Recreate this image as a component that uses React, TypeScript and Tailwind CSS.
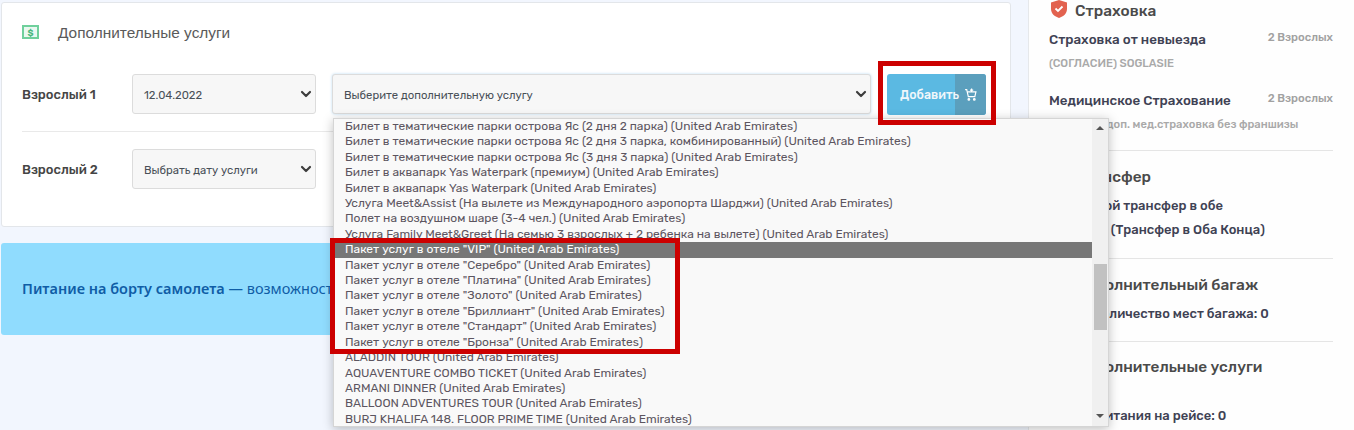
import { ChevronDown } from "lucide-react";

const FONT = "font-['Rubik','Noto_Sans','Open_Sans',sans-serif]";

const options = [
  'Билет в тематические парки острова Яс (2 дня 2 парка) (United Arab Emirates)',
  'Билет в тематические парки острова Яс (2 дня 3 парка, комбинированный) (United Arab Emirates)',
  'Билет в тематические парки острова Яс (3 дня 3 парка) (United Arab Emirates)',
  'Билет в аквапарк Yas Waterpark (премиум) (United Arab Emirates)',
  'Билет в аквапарк Yas Waterpark (United Arab Emirates)',
  'Услуга Meet&Assist (На вылете из Международного аэропорта Шарджи) (United Arab Emirates)',
  'Полет на воздушном шаре (3-4 чел.) (United Arab Emirates)',
  'Услуга Family Meet&Greet (На семью 3 взрослых + 2 ребенка на вылете) (United Arab Emirates)',
  'Пакет услуг в отеле "VIP" (United Arab Emirates)',
  'Пакет услуг в отеле "Серебро" (United Arab Emirates)',
  'Пакет услуг в отеле "Платина" (United Arab Emirates)',
  'Пакет услуг в отеле "Золото" (United Arab Emirates)',
  'Пакет услуг в отеле "Бриллиант" (United Arab Emirates)',
  'Пакет услуг в отеле "Стандарт" (United Arab Emirates)',
  'Пакет услуг в отеле "Бронза" (United Arab Emirates)',
  'ALADDIN TOUR (United Arab Emirates)',
  'AQUAVENTURE COMBO TICKET (United Arab Emirates)',
  'ARMANI DINNER (United Arab Emirates)',
  'BALLOON ADVENTURES TOUR (United Arab Emirates)',
  'BURJ KHALIFA 148. FLOOR PRIME TIME (United Arab Emirates)',
];

function FakeSelect({ text, className }: { text: string; className: string }) {
  return (
    <div className={`h-10 flex items-center justify-between rounded-[3px] border border-[#dcdcdc] bg-[#f7f7f7] pl-[11px] pr-[1px] text-[11.3px] text-[#495057] ${className}`}>
      <span className="whitespace-nowrap pt-[2px]">{text}</span>
      <ChevronDown size={16} strokeWidth={3.2} className="text-[#3d3d3d]" />
    </div>
  );
}

function SideItem({ title, sub, right }: { title: string; sub?: string; right?: string }) {
  return (
    <div>
      <div className="flex justify-between items-start">
        <span className="text-[13.4px] leading-[20px] font-medium text-[#3f4254]">{title}</span>
        {right && <span className="mt-[1px] text-[11.3px] leading-[14px] font-medium text-[#a1a1a1]">{right}</span>}
      </div>
      {sub && <div className="mt-[7px] text-[11.2px] leading-[16px] font-medium text-[#a9a9a9]">{sub}</div>}
    </div>
  );
}

export default function App() {
  return (
    <div className={`relative w-[1354px] h-[430px] overflow-hidden flex bg-[#f2f6fe] ${FONT}`}>
      <main className="w-[1028px] shrink-0 pl-[1px] pr-[17px] pt-[2px]">
        <section className="h-[225px] rounded-[3px] border border-[#e3e6ea] bg-white pl-[20px] pr-4">
          <div className="flex items-center pt-[20px] h-[42px]">
            <svg width="17" height="14" viewBox="0 0 17 14" className="mt-[-5px]">
              <rect x="1" y="1" width="15" height="12" fill="#eaf8f1" stroke="#6fd09c" strokeWidth="2" />
              <text x="8.5" y="10.5" fontSize="9" fontWeight="700" textAnchor="middle" fill="#4cb880">$</text>
            </svg>
            <h2 className="ml-[19px] mt-[-2px] text-[15.4px] font-['Liberation_Sans',sans-serif] text-[#5a5a5a]">Дополнительные услуги</h2>
          </div>
          <div className="flex items-start mt-[29px] pb-[16px] border-b border-[#e9e9e9]">
            <span className="w-[110px] h-10 pt-[2px] flex items-center text-[13px] font-medium text-[#454545]">Взрослый 1</span>
            <FakeSelect text="12.04.2022" className="w-[184px]" />
            <FakeSelect text="Выберите дополнительную услугу" className="w-[539px] ml-[16px] shadow-[0_0_3px_#bcdcf2] border-[#cfdfeb]" />
            <div className="ml-[16px] w-[99px] h-[41px] flex rounded-[3px] overflow-hidden bg-[#5bb9e2] relative">
              <span className="absolute left-[13px] top-[12px] text-[12.4px] font-medium text-[#f0f7fb] z-10">Добавить</span>
              <span className="ml-auto w-[31px] bg-[#5b9fbd] flex items-center justify-center">
                <svg width="13" height="13" viewBox="0 0 24 24" fill="none" stroke="#fff" strokeWidth="2.2">
                  <circle cx="9" cy="21" r="1.5" />
                  <circle cx="19" cy="21" r="1.5" />
                  <path d="M2 3h3l3 13h12l2-9H7M14 1v6M11 4h6" />
                </svg>
              </span>
            </div>
          </div>
          <div className="flex items-start mt-[17px]">
            <span className="w-[110px] h-10 pt-[2px] flex items-center text-[13px] font-medium text-[#454545]">Взрослый 2</span>
            <FakeSelect text="Выбрать дату услуги" className="w-[184px]" />
          </div>
        </section>
        <div className="mt-[16px] h-[92px] rounded-[3px] bg-[#90dcfe] flex items-center pl-[21px] font-['Noto_Sans',sans-serif] text-[14.5px] text-[#0f5da6] whitespace-nowrap overflow-hidden">
          <b className="font-semibold">Питание на борту самолета</b>&nbsp;— возможность заказать специальное питание
        </div>
      </main>

      <aside className="w-[326px] shrink-0 bg-[#fefefe] border-l border-[#e6e8eb] pl-[20px] pr-[21px] whitespace-nowrap">
        <div className="flex items-center h-[24px]">
          <svg width="16" height="18" viewBox="0 0 16 18" className="ml-[2px] self-start">
            <path d="M8 0l8 2.5v6.500c0 4.500-3.500 7.500-8 9-4.500-1.500-8-4.500-8-9V2.500z" fill="#e2624f" />
            <path d="M4.500 8.500l2.500 2.500 4.500-4.500" stroke="#fff" strokeWidth="1.800" fill="none" />
          </svg>
          <span className="ml-[8px] text-[15.4px] font-medium text-[#4a4a4a]">Страховка</span>
        </div>
        <div className="mt-[5px]">
          <SideItem title="Страховка от невыезда" sub="(СОГЛАСИЕ) SOGLASIE" right="2 Взрослых" />
        </div>
        <div className="mt-[18px] pb-[17px] border-b border-[#e5e5e5]">
          <SideItem title="Медицинское Страхование" sub="Базовая + доп. мед.страховка без франшизы" right="2 Взрослых" />
        </div>
        <h3 className="mt-[16px] text-[15.4px] leading-[20px] font-medium text-[#4a4a4a] pl-[26px]">Трансфер</h3>
        <div className="mt-[7px] pb-[16px] pl-[3px] border-b border-[#e5e5e5] text-[13px] leading-[24px] font-medium text-[#3f4254]">
          Групповой трансфер в обе<br />стороны (Трансфер в Оба Конца)
        </div>
        <h3 className="mt-[16px] text-[15.4px] leading-[20px] font-medium text-[#4a4a4a] pl-[26px]">Дополнительный багаж</h3>
        <div className="mt-[9px] pb-[17px] border-b border-[#e5e5e5] text-[13px] leading-[20px] font-medium text-[#3f4254]">
          Общее количество мест багажа: 0
        </div>
        <h3 className="mt-[15px] text-[15.4px] leading-[20px] font-medium text-[#4a4a4a] pl-[26px]">Дополнительные услуги</h3>
        <div className="mt-[29px] text-[13px] leading-[20px] font-medium text-[#3f4254]">Кол-во питания на рейсе: 0</div>
      </aside>

      {/* open native-style dropdown list */}
      <div className="absolute left-[333px] top-[118px] w-[776px] h-[309px] flex bg-[#f9f9f9] border border-[#d5d5d5] shadow-[0_2px_10px_rgba(0,0,0,0.25)] overflow-hidden">
        <ul className="flex-1 text-[12px] leading-[15.4px] text-[#5c5560] whitespace-nowrap">
          {options.map((o, i) => (
            <li key={o} className={i === 8 ? "pl-[11px] bg-[#777777] text-white" : "pl-[11px]"}>{o}</li>
          ))}
        </ul>
        <div className="w-[16px] bg-[#f0f0f0] flex flex-col items-center pt-[7px] pb-[8px]">
          <span className="w-0 h-0 border-x-[4px] border-x-transparent border-b-[4px] border-b-[#555]" />
          <span className="w-[13px] h-[66px] bg-[#c1c1c1] mt-[134px]" />
          <span className="mt-auto w-0 h-0 border-x-[4px] border-x-transparent border-t-[4px] border-t-[#555]" />
        </div>
      </div>

      {/* red annotations */}
      <div className="absolute left-[330px] top-[238px] w-[350px] h-[116px] border-[5px] border-[#cc0000]" />
      <div className="absolute left-[878px] top-[61px] w-[118px] h-[64px] border-[5px] border-[#cc0000]" />
    </div>
  );
}
